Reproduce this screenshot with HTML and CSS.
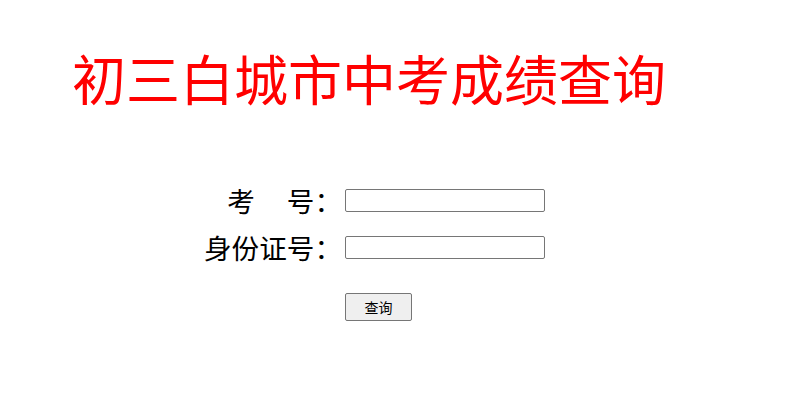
FILE: index.html
```html
<!DOCTYPE html>
<html lang="zh-CN">
<head>
<meta charset="utf-8">
<title>初三白城市中考成绩查询</title>
<link rel="stylesheet" href="styles.css">
</head>
<body>
<h1 class="title">初三白城市中考成绩查询</h1>
<form class="query-form">
  <label class="field-label" for="exam-no">考<span class="wide-gap"></span>号：</label>
  <input class="field-input" id="exam-no" type="text">
  <label class="field-label" for="id-no">身份证号：</label>
  <input class="field-input" id="id-no" type="text">
  <div class="actions">
    <button class="submit" type="button">查询</button>
  </div>
</form>
</body>
</html>
```
FILE: styles.css
```css
body {
  margin: 0;
  font-family: "Noto Sans CJK SC", "Noto Sans", sans-serif;
  background: #fff;
}

.title {
  margin: 44px 0 0 72px;
  font-size: 54px;
  font-weight: normal;
  line-height: 68px;
  color: #ff0000;
}

.query-form {
  display: grid;
  grid-template-columns: 342px 200px;
  column-gap: 3px;
  row-gap: 24px;
  align-items: center;
  margin-top: 77px;
}

.field-label {
  justify-self: end;
  font-size: 27.6px;
  line-height: 23px;
  color: #000;
}

.wide-gap {
  display: inline-block;
  width: 32px;
}

.field-input {
  box-sizing: border-box;
  width: 200px;
  height: 23px;
  margin: 0;
  border: 1px solid #767676;
  border-radius: 2px;
  padding: 1px 2px;
}

.actions {
  grid-column: 2;
  padding-top: 10px;
}

.submit {
  box-sizing: border-box;
  width: 67px;
  height: 28px;
  margin: 0;
  font-family: "Noto Sans CJK SC", sans-serif;
  font-size: 14px;
  color: #000;
  background: #efefef;
  border: 1px solid #767676;
  border-radius: 2px;
}
```
